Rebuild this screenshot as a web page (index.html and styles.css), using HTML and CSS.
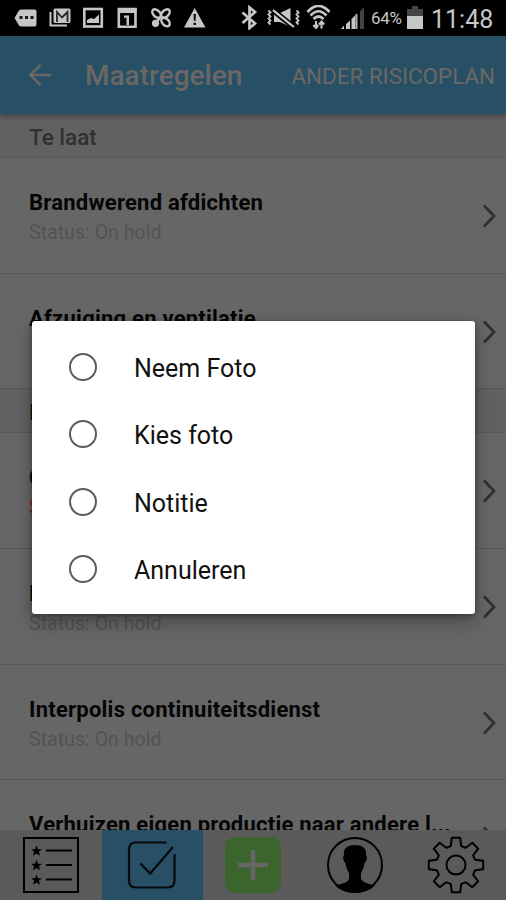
FILE: index.html
```
<!DOCTYPE html>
<html lang="nl">
<head>
<meta charset="utf-8">
<title>Maatregelen</title>
<link rel="stylesheet" href="styles.css">
</head>
<body>
<svg width="0" height="0" class="defs">
  <defs>
    <symbol id="chevron" viewBox="0 0 14 24"><path d="M2 1.500 12 12 2 22.500" fill="none" stroke="currentColor" stroke-width="2.800"/></symbol>
    <path id="star" d="M0-5.500 1.500-1.800H5.500L2.400.7 3.500 4.800 0 2.400-3.500 4.800-2.400.7-5.500-1.800H-1.500Z"/>
    <path id="tooth" d="M-7.500-18 -5.200-19.200 -4.200-27.200H4.200L5.200-19.200 7.500-18"/>
  </defs>
</svg>
<div class="screen">
  <div class="statusbar">
    <svg class="notifications" width="194" height="22" viewBox="14 7 194 22" fill="#c6c6c6">
      <path d="M14.500 18 19 10.500Q20 9.500 21.500 9.500H34.500Q36.500 9.500 36.500 11.500V24.500Q36.500 26.500 34.500 26.500H21.500Q20 26.500 19 25.500Z"/>
      <path d="M19.500 16h3v3h-3zM25 16h3v3h-3zM30.500 16h3v3h-3z" fill="#161616"/>
      <path d="M50.500 12V25.500H67" fill="none" stroke="#c6c6c6" stroke-width="2"/>
      <rect x="53.500" y="8.500" width="17" height="14.500" rx="1.500"/>
      <path d="M57 22V12L62 17.500 67.500 12V22" fill="none" stroke="#252525" stroke-width="1.800"/>
      <rect x="84.300" y="9" width="17.500" height="17.500" fill="none" stroke="#c6c6c6" stroke-width="2.600"/>
      <path d="M87 23V20L91 18 94 19 99 14.500V23Z"/>
      <path d="M118.800 9H135.500V26.800H118.800Z" fill="none" stroke="#c6c6c6" stroke-width="2.600"/>
      <path d="M118 8h18.500v5H118zM124 15.500H129V25H126.500V17.800H124Z"/>
      <g fill="none" stroke="#c6c6c6" stroke-width="2.500">
        <ellipse cx="156.500" cy="13.500" rx="3.200" ry="5" transform="rotate(-45 156.500 13.500)"/>
        <ellipse cx="165.500" cy="13.500" rx="3.200" ry="5" transform="rotate(45 165.500 13.500)"/>
        <ellipse cx="165.500" cy="22" rx="3.200" ry="5" transform="rotate(-45 165.500 22)"/>
        <path d="M160 18 155 23"/>
      </g>
      <circle cx="155.500" cy="23.300" r="3.600"/>
      <path d="M194.700 8 205.500 27.500H184Z"/>
      <path d="M193.500 14h2.500l-.4 7h-1.700zM193.500 22.700h2.500V25h-2.500z" fill="#151515"/>
    </svg>
    <svg class="signals" width="125" height="25" viewBox="240 5 125 25" fill="none" stroke="#c6c6c6">
      <path d="M242.500 12.500 255 23.500 249.500 28V7.500L255 12 242.500 23" stroke-width="2.700"/>
      <path d="M268.500 10.500l2 2-2 2 2 2-2 2 2 2-2 2 2 2M296.500 10.500l2 2-2 2 2 2-2 2 2 2-2 2 2 2" stroke-width="1.800"/>
      <path d="M274 13H280L290.500 8V27L280 22H274Z" fill="#c6c6c6" stroke="none"/>
      <path d="M273 8 294.500 25.500" stroke="#000" stroke-width="2"/>
      <path d="M273 12.500 292 28" stroke="#000" stroke-width="2"/>
      <path d="M273 10.200 294 27" stroke-width="2.200"/>
      <path d="M307.500 12Q318.500 0 329.500 12M310.500 15.500Q318.500 7 326.500 15.500M313.500 19Q318.500 14 323.500 19" stroke-width="2.700"/>
      <path d="M316 21V28M313.300 25 316 27.800 318.300 25M321.500 28.500V21.500M319 24.500 321.500 21.500 324.300 24.500" stroke-width="2.100"/>
      <path d="M341 29h3v-3.500zM346 29h4v-8.500l-4 3.500zM351.500 29h4V15l-4 4z" fill="#c6c6c6" stroke="none"/>
      <path d="M356.500 29V14" stroke="#aaa" stroke-width="2"/>
      <path d="M360 29V11.500L364 7V29Z" fill="#434343" stroke="none"/>
    </svg>
    <span class="percent">64%</span>
    <svg class="battery" width="16" height="24" viewBox="0 0 16 24"><path d="M5 1h6v3h5v8H0V4h5z" fill="#454545"/><path d="M0 11h16v13H0z" fill="#c6c6c6"/></svg>
    <span class="clock">11:48</span>
  </div>
  <header class="appbar">
    <svg width="24" height="24" viewBox="0 0 24 24" fill="none" stroke="#6b6764" stroke-width="2.500"><path d="M23 12H2.500M12.500 1.800 2.300 12 12.500 22.200"/></svg>
    <h1>Maatregelen</h1>
    <span class="action">ANDER RISICOPLAN</span>
  </header>
  <main class="list">
    <div class="section"><span>Te laat</span></div>
    <div class="row"><div><b>Brandwerend afdichten</b><p>Status: On hold</p></div><svg class="chev"><use href="#chevron"/></svg></div>
    <div class="row"><div><b>Afzuiging en ventilatie</b></div><svg class="chev"><use href="#chevron"/></svg></div>
    <div class="section"><span class="dark">L</span></div>
    <div class="row"><div><b>C</b><p class="late">S</p></div><svg class="chev"><use href="#chevron"/></svg></div>
    <div class="row"><div><b>I</b><p>Status: On hold</p></div><svg class="chev"><use href="#chevron"/></svg></div>
    <div class="row"><div><b>Interpolis continuiteitsdienst</b><p>Status: On hold</p></div><svg class="chev"><use href="#chevron"/></svg></div>
    <div class="row"><div><b>Verhuizen eigen productie naar andere l...</b></div><svg class="chev"><use href="#chevron"/></svg></div>
  </main>
  <nav class="tabs">
    <div><svg viewBox="-29 -29 58 58"><path d="M-27-27H27V27H-27Z" fill="none" stroke="#000" stroke-width="2"/><path d="M-5-14.500H21M-5 0H21M-5 14.500H21" stroke="#000" stroke-width="2"/><use href="#star" x="-14.500" y="-14"/><use href="#star" x="-14.500" y=".5"/><use href="#star" x="-14.500" y="15"/></svg></div>
    <div class="active"><svg viewBox="-29 -29 58 58" fill="none" stroke="#05090b" stroke-width="2.200"><path d="M14.500-22.500H-16Q-23-22.500-23-15.500V15.500Q-23 22.500-16 22.500H15.500Q22.500 22.500 22.500 15.500V-11M-11.500-1.500-1.800 8.500 21-18"/></svg></div>
    <div><svg viewBox="-29 -29 58 58"><rect x="-28" y="-28" width="56" height="56" rx="10" fill="#3c652e"/><path d="M0-15V15M-15 0H15" stroke="#666" stroke-width="4.600"/></svg></div>
    <div><svg viewBox="-29 -29 58 58"><circle r="27" fill="none" stroke="#000" stroke-width="2"/><path d="M-11-10C-12-17-7-20 0-20S12-17 11-10C13-7 11-3 9.500-2 9 3 7 6 6 8V14C8 18 15 19 20 20.500Q12 28 0 28T-20 20.500C-15 19-7 18-6 14V8C-8 5-9 2-9.500-2-11-3-13-7-11-10Z"/></svg></div>
    <div><svg viewBox="-29 -29 58 58" fill="none" stroke="#000" stroke-width="2" stroke-linejoin="round"><use href="#tooth"/><use href="#tooth" transform="rotate(45)"/><use href="#tooth" transform="rotate(90)"/><use href="#tooth" transform="rotate(135)"/><use href="#tooth" transform="rotate(180)"/><use href="#tooth" transform="rotate(225)"/><use href="#tooth" transform="rotate(270)"/><use href="#tooth" transform="rotate(315)"/><circle r="9.500"/></svg></div>
  </nav>
  <div class="dialog">
    <label><i></i><span>Neem Foto</span></label>
    <label><i></i><span>Kies foto</span></label>
    <label><i></i><span>Notitie</span></label>
    <label><i></i><span>Annuleren</span></label>
  </div>
</div>
</body>
</html>
```

FILE: styles.css
```
* { box-sizing: border-box; }
body { margin: 0; font-family: Roboto, "Liberation Sans", sans-serif; }
.defs { position: absolute; }
.screen { position: relative; width: 506px; height: 900px; display: flex; flex-direction: column; background: #666; overflow: hidden; }
.statusbar { flex: none; height: 36px; background: #000; display: flex; color: #c6c6c6; white-space: nowrap; }
.notifications { margin: 7px 0 0 14px; }
.signals { margin: 5px 0 0 32px; }
.percent { margin-left: 6px; width: 32px; font-size: 17px; line-height: 37px; letter-spacing: -.3px; }
.battery { margin: 5px 0 0 4px; }
.clock { margin-left: 8px; font-size: 25px; line-height: 39px; }
.appbar { flex: none; height: 78px; background: #275066; display: flex; align-items: center; padding: 0 11px 0 28px; color: #6b6764; white-space: nowrap; box-shadow: 0 2px 6px rgba(0,0,0,.35); z-index: 1; }
.appbar h1 { margin: 0 0 0 33px; padding-top: 2px; font-size: 28px; font-weight: 500; line-height: 76px; }
.action { margin-left: auto; padding-top: 2px; font-size: 22.4px; }
.list { flex: 1; min-height: 0; overflow: hidden; }
.section { height: 44px; background: #616161; border-bottom: 1px solid #595959; padding-left: 29px; font-size: 22.500px; font-weight: 500; line-height: 47px; color: #303030; }
.section .dark { color: #111; }
.row { height: 115.700px; border-bottom: 1px solid #575757; padding: 1px 10px 0 29px; display: flex; align-items: center; justify-content: space-between; }
.row > div { height: 100%; padding-top: 31px; white-space: nowrap; }
.row b { display: block; font-size: 22px; line-height: 26px; font-weight: 700; letter-spacing: .23px; color: #050505; }
.row p { margin: 4px 0 0; font-size: 19.600px; line-height: 26px; color: #535353; }
.row .late { color: #7c2d12; }
.chev { width: 14px; height: 24px; color: #303030; flex: none; }
.tabs { flex: none; height: 70px; background: #5a5a5a; display: grid; grid-template-columns: 102px 101px 101px 101px 101px; }
.tabs div { display: flex; align-items: center; justify-content: center; }
.tabs .active { background: #275066; }
.tabs div:nth-child(2) svg, .tabs div:nth-child(3) svg { margin-right: 2px; }
.tabs svg { width: 58px; height: 58px; }
.dialog { position: absolute; z-index: 2; left: 32px; top: 321px; width: 443px; height: 293px; padding-top: 12px; background: #fff; border-radius: 3px; box-shadow: 0 8px 18px rgba(0,0,0,.3), 0 1px 5px rgba(0,0,0,.35); }
.dialog label { height: 67.500px; display: flex; align-items: center; padding-left: 37px; font-size: 25px; color: #111; }
.dialog i { width: 28px; height: 28px; border: 2.500px solid #5c5c5c; border-radius: 50%; margin-right: 37px; }
.dialog span { padding-top: 3px; }
```
